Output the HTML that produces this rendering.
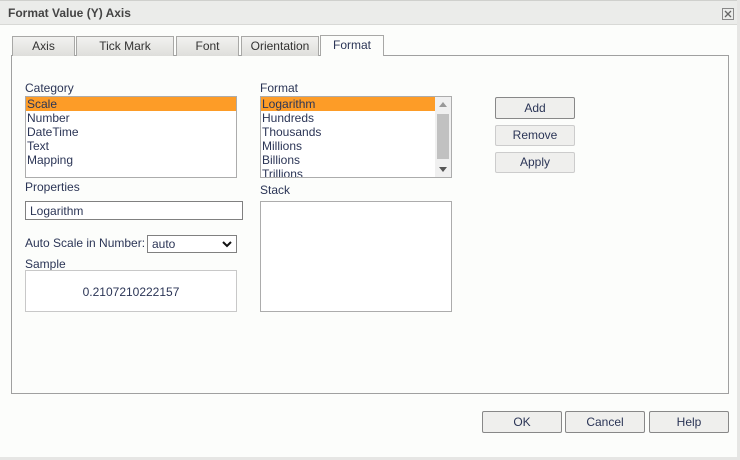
<!DOCTYPE html><html><head><style>
*{box-sizing:border-box;margin:0;padding:0}
body{width:740px;height:460px;background:#fcfdfb;font-family:"Liberation Sans",Tahoma,sans-serif;font-size:12px;color:#2b3556;position:relative;overflow:hidden}
.a{position:absolute}
.title{left:0;top:0;width:740px;height:25px;background:#ebecea;border-bottom:1px solid #d8d9d6;border-top:1px solid #cfd0cd}
.title span{position:absolute;left:8px;top:5px;font-weight:bold;color:#444;font-size:12px}
.tab{top:36px;height:20px;background:linear-gradient(#f2f2f0,#dededb);border:1px solid #a8a8a6;border-bottom:none;text-align:center;line-height:19px;color:#333}
.panel{left:11px;top:55px;width:718px;height:339px;border:1px solid #a0a0a0;background:#fcfdfb}
.box{border:1px solid #acacac;background:#fff}
.it{height:14px;line-height:14px;padding-left:1px}
.sel{background:#fd9c27}
.btn{border:1px solid #a8a8a8;border-radius:2px;background:#efefed;text-align:center;color:#2b3556}
</style></head><body>
<div class="a title"><span>Format Value (Y) Axis</span>
<svg class="a" style="left:722px;top:7px" width="12" height="12"><rect x=".5" y=".5" width="11" height="11" fill="none" stroke="#888"/><path d="M3 3L9 9M9 3L3 9" stroke="#666" stroke-width="1.3"/></svg></div>
<div class="a panel"></div>
<div class="a tab" style="left:12px;width:63px">Axis</div>
<div class="a tab" style="left:76px;width:98px">Tick Mark</div>
<div class="a tab" style="left:176px;width:63px">Font</div>
<div class="a tab" style="left:241px;width:78px">Orientation</div>
<div class="a tab" style="left:320px;top:35px;height:21px;width:64px;background:#fcfdfb;color:#2b3556">Format</div>
<div class="a" style="left:25px;top:81px">Category</div>
<div class="a box" style="left:25px;top:96px;width:212px;height:82px">
<div class="it sel">Scale</div><div class="it">Number</div><div class="it">DateTime</div><div class="it">Text</div><div class="it">Mapping</div></div>
<div class="a" style="left:260px;top:81px">Format</div>
<div class="a box" style="left:260px;top:96px;width:192px;height:82px;overflow:hidden">
<div style="width:174px"><div class="it sel">Logarithm</div><div class="it">Hundreds</div><div class="it">Thousands</div><div class="it">Millions</div><div class="it">Billions</div><div class="it">Trillions</div></div>
<div class="a" style="left:174px;top:0;width:17px;height:80px;background:#f0f0f0"><div class="a" style="left:2px;top:17px;width:12px;height:45px;background:#c1c1c1"></div>
<svg class="a" style="left:4px;top:5px" width="8" height="5"><path d="M0 5L4 0L8 5Z" fill="#999"/></svg>
<svg class="a" style="left:4px;top:70px" width="8" height="5"><path d="M0 0L4 5L8 0Z" fill="#555"/></svg></div></div>
<div class="a btn" style="left:495px;top:97px;width:80px;height:22px;line-height:20px;border-color:#888">Add</div>
<div class="a btn" style="left:495px;top:125px;width:80px;height:21px;line-height:19px;border-color:#ccc">Remove</div>
<div class="a btn" style="left:495px;top:152px;width:80px;height:21px;line-height:19px;border-color:#ccc">Apply</div>
<div class="a" style="left:25px;top:180px">Properties</div>
<div class="a box" style="left:25px;top:201px;width:218px;height:19px;border-color:#808080;padding:2px 4px">Logarithm</div>
<div class="a" style="left:25px;top:236px">Auto Scale in Number:</div>
<div class="a box" style="left:147px;top:235px;width:90px;height:18px;border-color:#808080;padding:1px 4px">auto
<svg class="a" style="left:74px;top:5px" width="10" height="7"><path d="M1 1L5 5L9 1" fill="none" stroke="#111" stroke-width="2"/></svg></div>
<div class="a" style="left:25px;top:257px">Sample</div>
<div class="a box" style="left:25px;top:270px;width:212px;height:42px;text-align:center;line-height:42px;border-color:#c8c8c8">0.2107210222157</div>
<div class="a" style="left:260px;top:183px">Stack</div>
<div class="a box" style="left:260px;top:201px;width:192px;height:111px"></div>
<div class="a btn" style="left:482px;top:411px;width:80px;height:22px;line-height:20px;border-color:#888">OK</div>
<div class="a btn" style="left:565px;top:411px;width:80px;height:22px;line-height:20px;border-color:#888">Cancel</div>
<div class="a btn" style="left:649px;top:411px;width:80px;height:22px;line-height:20px;border-color:#888">Help</div>
<div class="a" style="left:737px;top:0;width:3px;height:460px;background:#e6e6e4"></div>
<div class="a" style="left:0;top:457px;width:740px;height:3px;background:#e6e6e4"></div>
</body></html>
